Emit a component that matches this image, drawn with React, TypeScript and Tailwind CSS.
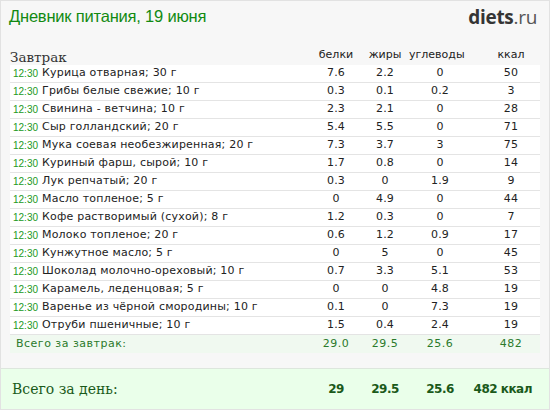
import React from 'react'

const rows = [
  { name: 'Курица отварная; 30 г', p: '7.6', f: '2.2', c: '0', k: '50' },
  { name: 'Грибы белые свежие; 10 г', p: '0.3', f: '0.1', c: '0.2', k: '3' },
  { name: 'Свинина - ветчина; 10 г', p: '2.3', f: '2.1', c: '0', k: '28' },
  { name: 'Сыр голландский; 20 г', p: '5.4', f: '5.5', c: '0', k: '71' },
  { name: 'Мука соевая необезжиренная; 20 г', p: '7.3', f: '3.7', c: '3', k: '75' },
  { name: 'Куриный фарш, сырой; 10 г', p: '1.7', f: '0.8', c: '0', k: '14' },
  { name: 'Лук репчатый; 20 г', p: '0.3', f: '0', c: '1.9', k: '9' },
  { name: 'Масло топленое; 5 г', p: '0', f: '4.9', c: '0', k: '44' },
  { name: 'Кофе растворимый (сухой); 8 г', p: '1.2', f: '0.3', c: '0', k: '7' },
  { name: 'Молоко топленое; 20 г', p: '0.6', f: '1.2', c: '0.9', k: '17' },
  { name: 'Кунжутное масло; 5 г', p: '0', f: '5', c: '0', k: '45' },
  { name: 'Шоколад молочно-ореховый; 10 г', p: '0.7', f: '3.3', c: '5.1', k: '53' },
  { name: 'Карамель, леденцовая; 5 г', p: '0', f: '0', c: '4.8', k: '19' },
  { name: 'Варенье из чёрной смородины; 10 г', p: '0.1', f: '0', c: '7.3', k: '19' },
  { name: 'Отруби пшеничные; 10 г', p: '1.5', f: '0.4', c: '2.4', k: '19' },
]

const cols = 'grid grid-cols-[32px_269px_50px_48px_62px_14px_52px]'

export default function App() {
  return (
    <div className="w-[550px] h-[410px] bg-[#f7f7f7] border border-[#e2e2e2] flex flex-col text-[#222] font-['DejaVu_Sans',sans-serif] overflow-hidden">
      <div className="h-[32px] flex items-center justify-between pl-[8px] pr-[12px]">
        <h1 className="text-[16.5px] mt-[-2px] text-[#128a12] font-['Liberation_Sans',sans-serif] tracking-[-0.2px]">Дневник питания, 19 июня</h1>
        <div className="text-[19px] tracking-[-0.3px] font-['Open_Sans',sans-serif]">
          <span className="font-bold text-[#353535]">diets</span>
          <span className="text-[#555]">.ru</span>
        </div>
      </div>

      <div className="mx-[9px] mt-[14px] flex-1 flex flex-col">
        <div className={`${cols} h-[18px] items-end`}>
          <div className="col-span-2 text-[13.5px] leading-[18px] text-[#333] font-['DejaVu_Serif',serif]">Завтрак</div>
          <div className="text-[11px] text-center pb-[2px]">белки</div>
          <div className="text-[11px] text-center pb-[2px]">жиры</div>
          <div className="text-[11px] text-center pb-[2px] pr-[8px]">углеводы</div>
          <div />
          <div className="text-[11px] text-center pb-[2px]">ккал</div>
        </div>

        <div className="bg-white">
          {rows.map((r, i) => (
            <div key={i} className={`${cols} h-[18px] items-center border-b border-[#e4e4e4] text-[11px] tracking-[0.2px]`}>
              <div className="pl-[3px] text-[10px] text-[#229922] font-['Liberation_Sans',sans-serif] tracking-normal">12:30</div>
              <div className="whitespace-nowrap">{r.name}</div>
              <div className="text-center">{r.p}</div>
              <div className="text-center">{r.f}</div>
              <div className="text-center">{r.c}</div>
              <div />
              <div className="text-center">{r.k}</div>
            </div>
          ))}
          <div className={`${cols} h-[18px] items-center bg-[#f0f9f0] text-[11px] text-[#2b7a2b] tracking-[0.5px]`}>
            <div className="col-span-2 pl-[6px]">Всего за завтрак:</div>
            <div className="text-center">29.0</div>
            <div className="text-center">29.5</div>
            <div className="text-center">25.6</div>
            <div />
            <div className="text-center">482</div>
          </div>
        </div>
      </div>

      <div className="h-[41px] bg-[#eaffea] border-t border-[#dde6dd] text-[#1a5a1a] flex">
        <div className={`${cols} ml-[9px] items-center w-[527px]`}>
          <div className="col-span-2 text-[14px] font-['DejaVu_Serif',serif] pl-[2px]">Всего за день:</div>
          <div className="text-center text-[12px] font-bold tracking-[-0.5px]">29</div>
          <div className="text-center text-[12px] font-bold tracking-[-0.5px]">29.5</div>
          <div className="text-center text-[12px] font-bold tracking-[-0.5px]">25.6</div>
          <div className="col-span-2 text-right pr-[5px] text-[12px] font-bold tracking-[-0.5px]">482 ккал</div>
        </div>
      </div>
    </div>
  )
}
